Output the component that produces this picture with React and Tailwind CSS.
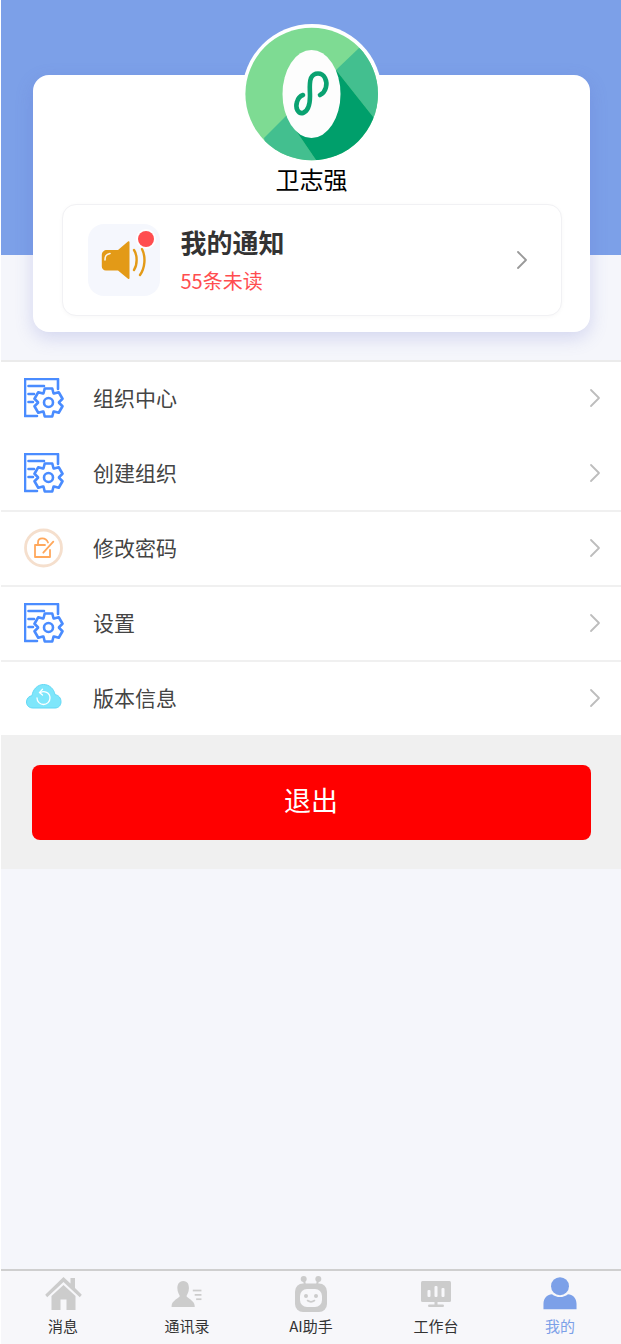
import React from "react";

const FONT = "font-['Noto_Sans_CJK_SC','Noto_Sans',sans-serif]";

function gearPath(cx, cy) {
  const teeth = 6;
  const pts = [];
  for (let i = 0; i < teeth; i++) {
    const a = (i / teeth) * Math.PI * 2 - Math.PI / 2;
    const step = Math.PI / teeth;
    const outer = 14.5;
    const inner = 10.5;
    [
      [-step * 0.95, inner],
      [-step * 0.5, outer],
      [step * 0.5, outer],
      [step * 0.95, inner],
    ].forEach(([d, r]) => {
      pts.push(`${(cx + Math.cos(a + d) * r).toFixed(2)},${(cy + Math.sin(a + d) * r).toFixed(2)}`);
    });
  }
  return "M" + pts.join("L") + "Z";
}

function DocGear() {
  return (
    <svg width="40" height="40" viewBox="0 0 40 40" fill="none" stroke="#4a8cff" strokeWidth="2.6" strokeLinejoin="round" strokeLinecap="round">
      <path d="M34 11V1H1V38H13" />
      <path d="M4.5 8H20M4.5 16H10M4.5 24H9" />
      <path d={gearPath(24.5, 24.5)} />
      <circle cx="24.5" cy="24.5" r="4.5" />
    </svg>
  );
}

function LockIcon() {
  return (
    <svg width="40" height="40" viewBox="0 0 40 40" fill="none" strokeLinecap="round" strokeLinejoin="round">
      <circle cx="19.5" cy="20" r="18" stroke="#f5dfcd" strokeWidth="2.8" />
      <path d="M21 17H11V29H26V22" stroke="#ffa85c" strokeWidth="1.8" />
      <path d="M14 17V14.5C14 9 22 9 24 14.5" stroke="#ffa85c" strokeWidth="1.8" />
      <path d="M19.3 24.7L29.3 13.7" stroke="#ffa85c" strokeWidth="1.8" />
    </svg>
  );
}

function CloudIcon() {
  return (
    <svg width="40" height="40" viewBox="0 0 40 40" fill="none">
      <path
        d="M9 30C5 30 2.5 27.5 2.5 24C2.5 20.5 5 18 8 17.7C8.8 11.5 13.5 6.5 19.5 6.5C25.5 6.5 30 11 31 16.7C34.5 17 37 20 37 23.7C37 27.5 34.5 30 31 30Z"
        fill="#7ee6fb"
        stroke="#62d8f5"
        strokeWidth="1"
      />
      <path d="M16.5 14.5C20 12.5 26 14.5 26 20C26 23.7 23 26.5 19.5 26.5C16 26.5 13 23.7 13 20" stroke="#ffffff" strokeWidth="1.3" strokeLinecap="round" />
      <path d="M18.5 11.3L15.4 14.6L18.5 17" stroke="#ffffff" strokeWidth="1.3" strokeLinecap="round" strokeLinejoin="round" />
    </svg>
  );
}

function Chevron({ color = "#bdbdbd", w = 12, h = 20 }) {
  return (
    <svg width={w} height={h} viewBox="0 0 12 20" fill="none">
      <path d="M2 2L10 10L2 18" stroke={color} strokeWidth="1.8" strokeLinecap="round" strokeLinejoin="round" />
    </svg>
  );
}

function Avatar() {
  return (
    <svg width="140" height="140" viewBox="0 0 140 140">
      <defs>
        <clipPath id="av">
          <circle cx="69.7" cy="70" r="66.3" />
        </clipPath>
      </defs>
      <circle cx="70" cy="70" r="70" fill="#ffffff" />
      <g clipPath="url(#av)">
        <rect width="140" height="140" fill="#7edb93" />
        <polygon points="117,24 94,46 132,94 150,110 150,30" fill="#43bf8f" />
        <polygon points="22,114 44,92 74,136 70,150 30,150" fill="#43bf8f" />
        <polygon points="94,46 132,94 120,150 74,136 44,92" fill="#009f6b" />
      </g>
      <ellipse cx="69.5" cy="70" rx="29" ry="44" fill="#fdfdfd" />
      <path
        d="M78 71C84 68 86 60 83 54C80 48 72 48 69 54C67 59 68 66 68 72C68 80 66 87 61 89C56 90 53 84 55 78C56 74 58 72 61 71"
        fill="none"
        stroke="#0aa271"
        strokeWidth="4.6"
        strokeLinecap="round"
      />
    </svg>
  );
}

function Speaker() {
  return (
    <svg width="72" height="72" viewBox="0 0 72 72" fill="none">
      <path d="M30 26L40 17.5C40.8 16.8 41.5 17.2 41.5 18.2V54C41.5 55 40.8 55.4 40 54.7L30 46.5H18C15.5 46.5 13.8 44.8 13.8 42.5V31C13.8 28 16 26 19 26Z" fill="#e39a17" />
      <path d="M17 36C17 32 18 30.5 22 29.5" stroke="#ffffff" strokeWidth="1.6" strokeLinecap="round" opacity="0.9" />
      <path d="M46 26C49.5 31 49.5 41 46 46" stroke="#e39a17" strokeWidth="2.4" strokeLinecap="round" />
      <path d="M54 25C58 33 57 44 52 51" stroke="#e39a17" strokeWidth="2.4" strokeLinecap="round" />
    </svg>
  );
}

const GRAY = "#cccccc";

function HomeIcon() {
  return (
    <svg width="37" height="33" viewBox="0 0 37 33" fill={GRAY}>
      <path d="M18.5 0L25.5 6.5V1H30V11L36.8 17.8L34.8 20.3L18.5 5L2.2 20.3L0.2 17.8Z" />
      <path d="M18.5 8L30.5 19V33H21.5V22.5H15.5V33H6.5V19Z" />
    </svg>
  );
}

function ContactIcon() {
  return (
    <svg width="32" height="26" viewBox="0 0 32 27" fill={GRAY}>
      <path d="M12 0C17 0 18 4 18 7.5C18 11.5 16 14 15.5 15.5C15.5 17.5 24 20 24 26V27H0V26C0 20 8.5 17.5 8.5 15.5C8 14 6 11.5 6 7.5C6 4 7.5 0 12 0Z" />
      <rect x="22" y="9" width="9" height="1.8" />
      <rect x="24" y="13.5" width="7" height="1.8" />
      <rect x="25.5" y="18" width="5.5" height="1.8" />
    </svg>
  );
}

function RobotIcon() {
  return (
    <svg width="32" height="36" viewBox="0 0 32 36" fill="none">
      <circle cx="8.7" cy="3" r="3" fill={GRAY} />
      <circle cx="23.3" cy="3" r="3" fill={GRAY} />
      <path d="M8.7 3L10 9M23.3 3L22 9" stroke={GRAY} strokeWidth="2" />
      <rect x="0" y="7.5" width="32" height="28.5" rx="8" fill={GRAY} />
      <rect x="5" y="13" width="22" height="18" rx="7" fill="#f7f7fa" />
      <circle cx="11" cy="20" r="2" fill={GRAY} />
      <circle cx="21" cy="20" r="2" fill={GRAY} />
      <path d="M12.5 24.5C14.5 26 17.5 26 19.5 24.5" stroke={GRAY} strokeWidth="1.6" strokeLinecap="round" />
    </svg>
  );
}

function BoardIcon() {
  return (
    <svg width="30" height="26" viewBox="1 1 30 26">
      <rect x="1" y="1" width="30" height="21" rx="1.5" fill={GRAY} />
      <rect x="7.5" y="10" width="3" height="7" rx="1" fill="#f7f7fa" />
      <rect x="14.5" y="6" width="3" height="11" rx="1" fill="#f7f7fa" />
      <rect x="21.5" y="8" width="3" height="9" rx="1" fill="#f7f7fa" />
      <rect x="14.5" y="22" width="3" height="4" fill={GRAY} />
      <rect x="8" y="24.5" width="16" height="2.5" rx="1.2" fill={GRAY} />
    </svg>
  );
}

function UserIcon() {
  return (
    <svg width="34" height="33" viewBox="0 0 36 34.5" fill="#7ca0e8">
      <circle cx="18" cy="9.5" r="9.5" />
      <path d="M0.5 34V28C0.5 22 5 18 9.5 18C12 20 15 21 18 21C21 21 24 20 26.5 18C31 18 35.5 22 35.5 28V34Z" />
    </svg>
  );
}

const rows = [
  { label: "组织中心", Icon: DocGear, cls: "h-[74px] pb-[2px]" },
  { label: "创建组织", Icon: DocGear, cls: "h-[76px] border-b-2 border-[#f0f0f0]" },
  { label: "修改密码", Icon: LockIcon, cls: "h-[75px] pb-[2px] border-b-2 border-[#f0f0f0]" },
  { label: "设置", Icon: DocGear, cls: "h-[75px] pb-[2px] border-b-2 border-[#f0f0f0]" },
  { label: "版本信息", Icon: CloudIcon, cls: "h-[73px] pb-[2px]" },
];

const tabs = [
  { label: "消息", Icon: HomeIcon, pb: "pb-[5px]" },
  { label: "通讯录", Icon: ContactIcon, pb: "pb-[8px]" },
  { label: "AI助手", Icon: RobotIcon, pb: "pb-[3px]" },
  { label: "工作台", Icon: BoardIcon, pb: "pb-[8px]" },
  { label: "我的", Icon: UserIcon, pb: "pb-[5px]", active: true },
];

export default function App() {
  return (
    <div className={`${FONT} h-[1344px] w-[621px] overflow-hidden bg-white pl-px flex flex-col`}>
      <main className="flex-1 bg-[#f5f6fb] flex flex-col">
        <div className="h-[255px] shrink-0 bg-[#7ca0e8]" />
        <section className="relative mt-[-180px] ml-[32px] h-[257px] w-[557px] shrink-0 rounded-[16px] bg-white shadow-[0_6px_18px_rgba(90,100,200,0.22)] flex flex-col items-center">
          <div className="mt-[-51px] h-[140px] w-[140px] shrink-0">
            <Avatar />
          </div>
          <div className="mt-[-3px] h-[36px] text-[24px] leading-[36px] text-black">卫志强</div>
          <div className="mt-[7px] flex h-[112px] w-[500px] items-center rounded-[14px] border border-[#f1f1f4] bg-white pl-[25px] pr-[33px] shadow-[0_1px_4px_rgba(0,0,0,0.03)]">
            <div className="relative h-[72px] w-[72px] shrink-0 rounded-[16px] bg-[#f5f7fd]">
              <Speaker />
              <span className="absolute left-[50px] top-[7px] h-[16px] w-[16px] rounded-full bg-[#ff4d4f] shadow-[0_0_0_2px_rgba(255,255,255,0.85)]" />
            </div>
            <div className="ml-[21px] flex-1">
              <div className="text-[26px] font-bold leading-[36px] text-[#333333]">我的通知</div>
              <div className="mt-[6px] text-[20px] leading-[30px] text-[#ff4d4f]">55条未读</div>
            </div>
            <Chevron color="#999999" />
          </div>
        </section>

        <ul className="mt-[28px] border-t-2 border-[#ebebeb] bg-white">
          {rows.map(({ label, Icon, cls }) => (
            <li key={label} className={`flex items-center pl-[23px] pr-[20px] ${cls}`}>
              <span className="flex h-[40px] w-[40px] shrink-0">
                <Icon />
              </span>
              <span className="ml-[29px] flex-1 text-[21px] text-[#444444]">{label}</span>
              <Chevron />
            </li>
          ))}
        </ul>

        <div className="flex h-[134px] items-start justify-center bg-[#f0f0f0] pt-[30px]">
          <button className="h-[75px] w-[559px] rounded-[8px] bg-[#ff0000] pb-[4px] text-[27px] text-white">退出</button>
        </div>
      </main>

      <nav className="grid h-[75px] shrink-0 grid-cols-[124px_124px_124px_126px_122px] border-t-2 border-[#cfcfcf] bg-[#f7f7fa]">
        {tabs.map(({ label, Icon, active, pb }) => (
          <div key={label} className="flex flex-col items-center">
            <div className={`flex h-[44px] items-end justify-center ${pb}`}>
              <Icon />
            </div>
            <span className={`text-[15px] leading-[22px] ${active ? "text-[#7ca0e8]" : "text-[#333333]"}`}>{label}</span>
          </div>
        ))}
      </nav>
    </div>
  );
}
